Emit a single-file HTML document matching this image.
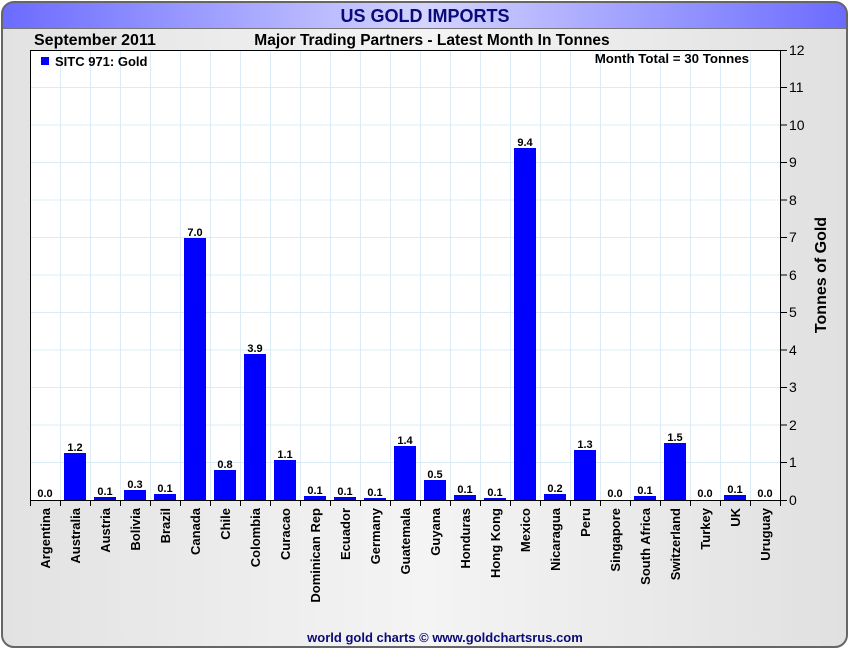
<!DOCTYPE html>
<html><head><style>body{margin:0;background:#fff}svg{display:block}</style></head><body>
<svg width="850" height="650" xmlns="http://www.w3.org/2000/svg" font-family="Liberation Sans, Arial, sans-serif">
<defs>
<linearGradient id="hd" x1="0" x2="1" y1="0" y2="0"><stop offset="0" stop-color="#6a6aff"/><stop offset="0.5" stop-color="#d4d4ff"/><stop offset="1" stop-color="#6a6aff"/></linearGradient>
<linearGradient id="bd" x1="0" x2="1" y1="0" y2="0"><stop offset="0" stop-color="#e2e2e2"/><stop offset="0.5" stop-color="#f4f4f4"/><stop offset="1" stop-color="#e0e0e0"/></linearGradient>
<clipPath id="cp"><rect x="2" y="2" width="845" height="645" rx="12"/></clipPath>
</defs>
<g clip-path="url(#cp)">
<rect x="0" y="0" width="850" height="650" fill="url(#bd)"/>
<rect x="0" y="0" width="850" height="28" fill="url(#hd)"/>
<line x1="0" y1="28.5" x2="850" y2="28.5" stroke="#777"/>
</g>
<rect x="2" y="2" width="845" height="645" rx="12" fill="none" stroke="#666" stroke-width="2"/>
<text x="425" y="22" text-anchor="middle" font-size="18" font-weight="bold" fill="#0a0a78">US GOLD IMPORTS</text>
<text x="34" y="45" font-size="16" font-weight="bold" fill="#000">September 2011</text>
<text x="432" y="45" text-anchor="middle" font-size="15.5" font-weight="bold" fill="#000">Major Trading Partners - Latest Month In Tonnes</text>
<rect x="30" y="50" width="751" height="450" fill="#fff"/>
<g stroke="#dcecf6" stroke-width="1">
<line x1="30" x2="781" y1="462.5" y2="462.5"/><line x1="30" x2="781" y1="425" y2="425"/><line x1="30" x2="781" y1="387.5" y2="387.5"/><line x1="30" x2="781" y1="350" y2="350"/><line x1="30" x2="781" y1="312.5" y2="312.5"/><line x1="30" x2="781" y1="275" y2="275"/><line x1="30" x2="781" y1="237.5" y2="237.5"/><line x1="30" x2="781" y1="200" y2="200"/><line x1="30" x2="781" y1="162.5" y2="162.5"/><line x1="30" x2="781" y1="125" y2="125"/><line x1="30" x2="781" y1="87.5" y2="87.5"/>
<line y1="50" y2="500" x1="60.5" x2="60.5"/><line y1="50" y2="500" x1="90.5" x2="90.5"/><line y1="50" y2="500" x1="120.5" x2="120.5"/><line y1="50" y2="500" x1="150.5" x2="150.5"/><line y1="50" y2="500" x1="180.5" x2="180.5"/><line y1="50" y2="500" x1="210.5" x2="210.5"/><line y1="50" y2="500" x1="240.5" x2="240.5"/><line y1="50" y2="500" x1="270.5" x2="270.5"/><line y1="50" y2="500" x1="300.5" x2="300.5"/><line y1="50" y2="500" x1="330.5" x2="330.5"/><line y1="50" y2="500" x1="360.5" x2="360.5"/><line y1="50" y2="500" x1="390.5" x2="390.5"/><line y1="50" y2="500" x1="420.5" x2="420.5"/><line y1="50" y2="500" x1="450.5" x2="450.5"/><line y1="50" y2="500" x1="480.5" x2="480.5"/><line y1="50" y2="500" x1="510.5" x2="510.5"/><line y1="50" y2="500" x1="540.5" x2="540.5"/><line y1="50" y2="500" x1="570.5" x2="570.5"/><line y1="50" y2="500" x1="600.5" x2="600.5"/><line y1="50" y2="500" x1="630.5" x2="630.5"/><line y1="50" y2="500" x1="660.5" x2="660.5"/><line y1="50" y2="500" x1="690.5" x2="690.5"/><line y1="50" y2="500" x1="720.5" x2="720.5"/><line y1="50" y2="500" x1="750.5" x2="750.5"/>
</g>
<g fill="#0000ff">
<rect x="64" y="453" width="22" height="47"/><rect x="94" y="497" width="22" height="3"/><rect x="124" y="490" width="22" height="10"/><rect x="154" y="494" width="22" height="6"/><rect x="184" y="238" width="22" height="262"/><rect x="214" y="470" width="22" height="30"/><rect x="244" y="354" width="22" height="146"/><rect x="274" y="460" width="22" height="40"/><rect x="304" y="496" width="22" height="4"/><rect x="334" y="497" width="22" height="3"/><rect x="364" y="498" width="22" height="2"/><rect x="394" y="446" width="22" height="54"/><rect x="424" y="480" width="22" height="20"/><rect x="454" y="495" width="22" height="5"/><rect x="484" y="498" width="22" height="2"/><rect x="514" y="148" width="22" height="352"/><rect x="544" y="494" width="22" height="6"/><rect x="574" y="450" width="22" height="50"/><rect x="634" y="496" width="22" height="4"/><rect x="664" y="443" width="22" height="57"/><rect x="724" y="495" width="22" height="5"/>
</g>
<g font-size="11" font-weight="bold" text-anchor="middle" fill="#000">
<text x="45" y="497">0.0</text><text x="75" y="451">1.2</text><text x="105" y="495">0.1</text><text x="135" y="488">0.3</text><text x="165" y="492">0.1</text><text x="195" y="236">7.0</text><text x="225" y="468">0.8</text><text x="255" y="352">3.9</text><text x="285" y="458">1.1</text><text x="315" y="494">0.1</text><text x="345" y="495">0.1</text><text x="375" y="496">0.1</text><text x="405" y="444">1.4</text><text x="435" y="478">0.5</text><text x="465" y="493">0.1</text><text x="495" y="496">0.1</text><text x="525" y="146">9.4</text><text x="555" y="492">0.2</text><text x="585" y="448">1.3</text><text x="615" y="497">0.0</text><text x="645" y="494">0.1</text><text x="675" y="441">1.5</text><text x="705" y="497">0.0</text><text x="735" y="493">0.1</text><text x="765" y="497">0.0</text>
</g>
<rect x="30.5" y="50.5" width="750" height="450" fill="none" stroke="#000"/>
<g stroke="#000">
<line x1="781" x2="787" y1="500.5" y2="500.5"/><line x1="781" x2="787" y1="462.5" y2="462.5"/><line x1="781" x2="787" y1="425" y2="425"/><line x1="781" x2="787" y1="387.5" y2="387.5"/><line x1="781" x2="787" y1="350" y2="350"/><line x1="781" x2="787" y1="312.5" y2="312.5"/><line x1="781" x2="787" y1="275" y2="275"/><line x1="781" x2="787" y1="237.5" y2="237.5"/><line x1="781" x2="787" y1="200" y2="200"/><line x1="781" x2="787" y1="162.5" y2="162.5"/><line x1="781" x2="787" y1="125" y2="125"/><line x1="781" x2="787" y1="87.5" y2="87.5"/><line x1="781" x2="787" y1="50.5" y2="50.5"/>
<line y1="500" y2="506" x1="30.5" x2="30.5"/><line y1="500" y2="506" x1="60.5" x2="60.5"/><line y1="500" y2="506" x1="90.5" x2="90.5"/><line y1="500" y2="506" x1="120.5" x2="120.5"/><line y1="500" y2="506" x1="150.5" x2="150.5"/><line y1="500" y2="506" x1="180.5" x2="180.5"/><line y1="500" y2="506" x1="210.5" x2="210.5"/><line y1="500" y2="506" x1="240.5" x2="240.5"/><line y1="500" y2="506" x1="270.5" x2="270.5"/><line y1="500" y2="506" x1="300.5" x2="300.5"/><line y1="500" y2="506" x1="330.5" x2="330.5"/><line y1="500" y2="506" x1="360.5" x2="360.5"/><line y1="500" y2="506" x1="390.5" x2="390.5"/><line y1="500" y2="506" x1="420.5" x2="420.5"/><line y1="500" y2="506" x1="450.5" x2="450.5"/><line y1="500" y2="506" x1="480.5" x2="480.5"/><line y1="500" y2="506" x1="510.5" x2="510.5"/><line y1="500" y2="506" x1="540.5" x2="540.5"/><line y1="500" y2="506" x1="570.5" x2="570.5"/><line y1="500" y2="506" x1="600.5" x2="600.5"/><line y1="500" y2="506" x1="630.5" x2="630.5"/><line y1="500" y2="506" x1="660.5" x2="660.5"/><line y1="500" y2="506" x1="690.5" x2="690.5"/><line y1="500" y2="506" x1="720.5" x2="720.5"/><line y1="500" y2="506" x1="750.5" x2="750.5"/><line y1="500" y2="506" x1="780.5" x2="780.5"/>
</g>
<g font-size="14" fill="#000">
<text x="789" y="505">0</text><text x="789" y="467">1</text><text x="789" y="430">2</text><text x="789" y="392">3</text><text x="789" y="355">4</text><text x="789" y="317">5</text><text x="789" y="280">6</text><text x="789" y="242">7</text><text x="789" y="205">8</text><text x="789" y="167">9</text><text x="789" y="130">10</text><text x="789" y="92">11</text><text x="789" y="55">12</text>
</g>
<text transform="translate(826,275) rotate(-90)" text-anchor="middle" font-size="16" font-weight="bold">Tonnes of Gold</text>
<rect x="41" y="57" width="8" height="8" fill="#0000ff"/>
<text x="55" y="66" font-size="13" font-weight="bold">SITC 971: Gold</text>
<text x="749" y="63" text-anchor="end" font-size="13.3" font-weight="bold">Month Total = 30 Tonnes</text>
<g font-size="13" font-weight="bold" text-anchor="end" fill="#000">
<text transform="translate(50,508) rotate(-90)">Argentina</text><text transform="translate(80,508) rotate(-90)">Australia</text><text transform="translate(110,508) rotate(-90)">Austria</text><text transform="translate(140,508) rotate(-90)">Bolivia</text><text transform="translate(170,508) rotate(-90)">Brazil</text><text transform="translate(200,508) rotate(-90)">Canada</text><text transform="translate(230,508) rotate(-90)">Chile</text><text transform="translate(260,508) rotate(-90)">Colombia</text><text transform="translate(290,508) rotate(-90)">Curacao</text><text transform="translate(320,508) rotate(-90)">Dominican Rep</text><text transform="translate(350,508) rotate(-90)">Ecuador</text><text transform="translate(380,508) rotate(-90)">Germany</text><text transform="translate(410,508) rotate(-90)">Guatemala</text><text transform="translate(440,508) rotate(-90)">Guyana</text><text transform="translate(470,508) rotate(-90)">Honduras</text><text transform="translate(500,508) rotate(-90)">Hong Kong</text><text transform="translate(530,508) rotate(-90)">Mexico</text><text transform="translate(560,508) rotate(-90)">Nicaragua</text><text transform="translate(590,508) rotate(-90)">Peru</text><text transform="translate(620,508) rotate(-90)">Singapore</text><text transform="translate(650,508) rotate(-90)">South Africa</text><text transform="translate(680,508) rotate(-90)">Switzerland</text><text transform="translate(710,508) rotate(-90)">Turkey</text><text transform="translate(740,508) rotate(-90)">UK</text><text transform="translate(770,508) rotate(-90)">Uruguay</text>
</g>
<text x="445" y="642" text-anchor="middle" font-size="13" font-weight="bold" fill="#0a0a78">world gold charts © www.goldchartsrus.com</text>
</svg>
</body></html>
